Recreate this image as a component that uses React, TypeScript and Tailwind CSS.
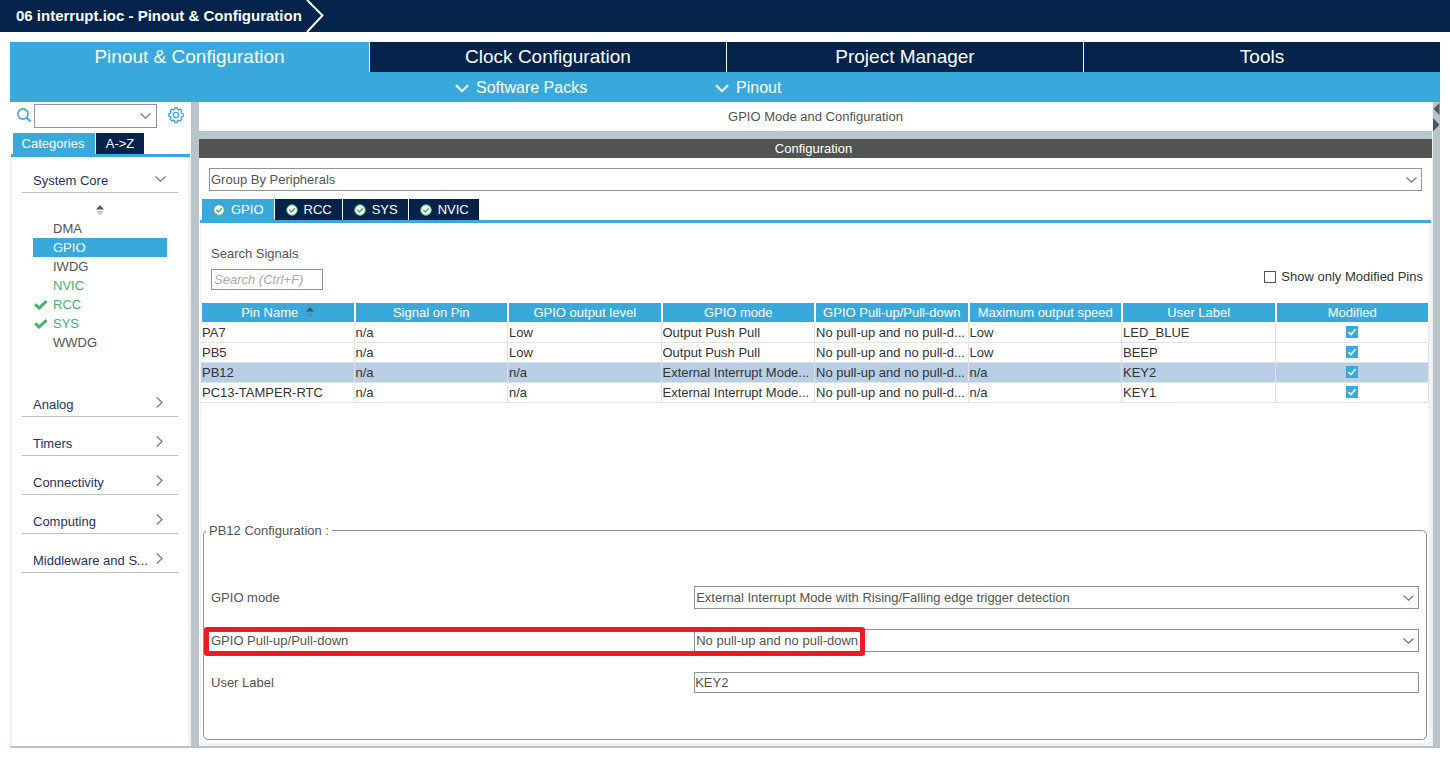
import { ReactNode, useState } from 'react';

interface Pin {
  name: string;
  signal: string;
  level: string;
  mode: string;
  pull: string;
  speed: string;
  label: string;
}

const pins: Pin[] = [
  { name: 'PA7', signal: 'n/a', level: 'Low', mode: 'Output Push Pull', pull: 'No pull-up and no pull-d...', speed: 'Low', label: 'LED_BLUE' },
  { name: 'PB5', signal: 'n/a', level: 'Low', mode: 'Output Push Pull', pull: 'No pull-up and no pull-d...', speed: 'Low', label: 'BEEP' },
  { name: 'PB12', signal: 'n/a', level: 'n/a', mode: 'External Interrupt Mode...', pull: 'No pull-up and no pull-d...', speed: 'n/a', label: 'KEY2' },
  { name: 'PC13-TAMPER-RTC', signal: 'n/a', level: 'n/a', mode: 'External Interrupt Mode...', pull: 'No pull-up and no pull-d...', speed: 'n/a', label: 'KEY1' },
];

const columns = [
  'Pin Name',
  'Signal on Pin',
  'GPIO output level',
  'GPIO mode',
  'GPIO Pull-up/Pull-down',
  'Maximum output speed',
  'User Label',
  'Modified',
];

const coreItems = [
  { name: 'DMA', state: 'idle' },
  { name: 'GPIO', state: 'active' },
  { name: 'IWDG', state: 'idle' },
  { name: 'NVIC', state: 'used' },
  { name: 'RCC', state: 'done' },
  { name: 'SYS', state: 'done' },
  { name: 'WWDG', state: 'idle' },
];

const categories = ['Analog', 'Timers', 'Connectivity', 'Computing', 'Middleware and S...'];

function ChevronDown({ className }: { className?: string }) {
  return (
    <svg className={className} width="11" height="6" viewBox="0 0 11 6" fill="none" stroke="#777" strokeWidth="1.2">
      <path d="M0.5 0.5 L5.5 5.2 L10.5 0.5" />
    </svg>
  );
}

function ChevronRight() {
  return (
    <svg className="mr-[15px] mb-[6px]" width="7" height="11" viewBox="0 0 7 11" fill="none" stroke="#777" strokeWidth="1.2">
      <path d="M0.7 0.5 L6 5.5 L0.7 10.5" />
    </svg>
  );
}

function MenuChevron() {
  return (
    <svg width="14" height="9" viewBox="0 0 14 9" fill="none" stroke="#fff" strokeWidth="2">
      <path d="M1 1.2 L7 7.2 L13 1.2" />
    </svg>
  );
}

function SortIcon({ up, down }: { up: string; down: string }) {
  return (
    <svg width="8" height="11" viewBox="0 0 8 11">
      <path d="M0 4.5 L4 0 L8 4.5 Z" fill={up} />
      <path d="M0 6 L4 10.5 L8 6 Z" fill={down} />
    </svg>
  );
}

function GearIcon() {
  return (
    <svg width="16" height="16" viewBox="0 0 16 16" fill="none" stroke="#39a9dc" strokeWidth="1.3">
      <path d="M6.9 0.7h2.2l.4 1.7 1.2.5 1.5-.9 1.6 1.6-.9 1.5.5 1.2 1.8.5v2.4l-1.8.5-.5 1.2.9 1.5-1.6 1.6-1.5-.9-1.2.5-.4 1.7H6.9l-.4-1.7-1.2-.5-1.5.9-1.6-1.6.9-1.5-.5-1.2-1.8-.5V6.8l1.8-.5.5-1.2-.9-1.5 1.6-1.6 1.5.9 1.2-.5z" />
      <circle cx="8" cy="8" r="2.6" />
    </svg>
  );
}

function StatusIcon() {
  return (
    <svg width="12" height="12" viewBox="0 0 12 12">
      <circle cx="6" cy="6" r="5.3" fill="#fff" stroke="#49b170" strokeWidth="1" />
      <path d="M3.2 5.8 L5.4 8 L9 4.3" fill="none" stroke="#49b170" strokeWidth="1.5" />
    </svg>
  );
}

function SelectBox({ id, label, value, className }: { id: string; label?: string; value: string; className?: string }) {
  return (
    <div className={`relative ${className ?? ''}`}>
      <select
        id={id}
        aria-label={label}
        className="block h-[23px] w-full appearance-none border border-[#8c949c] bg-white pl-px text-[#525452]"
      >
        <option>{value}</option>
      </select>
      <ChevronDown className="pointer-events-none absolute top-[9px] right-[5px]" />
    </div>
  );
}

function Sidebar() {
  return (
    <aside className="flex w-[181px] flex-shrink-0 flex-col">
      <div className="flex h-[31px] items-start pt-0.5 pl-[7px]">
        <svg className="mt-1 mr-[3px]" width="14" height="14" viewBox="0 0 14 14" fill="none" stroke="#39a9dc">
          <circle cx="6" cy="6" r="5.1" strokeWidth="1.6" />
          <path d="M9.6 9.6 L13.5 13.4" strokeWidth="2" />
        </svg>
        <div className="relative">
          <select aria-label="Search peripheral" className="block h-6 w-[123px] appearance-none border border-[#8c949c] bg-white" />
          <ChevronDown className="pointer-events-none absolute top-[9px] right-[6px]" />
        </div>
        <button aria-label="Settings" className="mt-[3px] ml-[11px]">
          <GearIcon />
        </button>
      </div>
      <div className="flex h-[21px] gap-px pl-[3px] text-white">
        <button className="w-[82px] bg-[#39a9dc] pr-0.5">Categories</button>
        <button className="w-12 bg-[#03234b]">A-&gt;Z</button>
      </div>
      <div className="mr-px ml-px h-[3px] bg-[#39a9dc]" />
      <nav className="flex-1 border-r-3 border-l-2 border-[#f0f2f4] pr-[10px] pl-[10px]">
        <button className="flex h-9 w-full items-center justify-between border-b border-[#b9c4ca] pt-3 pl-[11px] text-[#1e3264]">
          System Core
          <ChevronDown className="mr-3 mb-1" />
        </button>
        <div className="flex h-[26px] items-center justify-center pt-2">
          <SortIcon up="#525452" down="#c8c8c8" />
        </div>
        <ul className="mr-[11px] mb-[26px] ml-[11px]">
          {coreItems.map(item => (
            <li
              key={item.name}
              className={`flex h-[19px] items-center ${
                item.state === 'active' ? 'bg-[#39a9dc] text-white' :
                item.state === 'idle' ? 'text-[#525452]' :
                'text-[#49b170]'
              }`}
            >
              <span className="w-5 pl-px">
                {item.state === 'done' && (
                  <svg width="14" height="10" viewBox="0 0 14 10" fill="none" stroke="#49b170" strokeWidth="3">
                    <path d="M1.2 4.2 L5 8 L12.6 1.2" />
                  </svg>
                )}
              </span>
              {item.name}
            </li>
          ))}
        </ul>
        {categories.map(name => (
          <button
            key={name}
            className="flex h-[39px] w-full items-center justify-between border-b border-[#b9c4ca] pt-4 pl-[11px] text-[#1e3264]"
          >
            {name}
            <ChevronRight />
          </button>
        ))}
      </nav>
    </aside>
  );
}

function PinTable({ selected, onSelect }: { selected: string; onSelect: (name: string) => void }) {
  return (
    <table className="w-full table-fixed border-separate border-spacing-0">
      <thead>
        <tr>
          {columns.map((column, i) => (
            <th key={column} className="h-5 border-x border-b border-white bg-[#39a9dc] p-0 font-normal text-white">
              <span className="flex h-[19px] items-center justify-center gap-2 whitespace-nowrap">
                {column}
                {i === 0 && <SortIcon up="#525452" down="#4f94b8" />}
              </span>
            </th>
          ))}
        </tr>
      </thead>
      <tbody>
        {pins.map(pin => (
          <tr key={pin.name} onClick={() => onSelect(pin.name)} className={pin.name === selected ? 'bg-[#b8cee5]' : ''}>
            {[pin.name, pin.signal, pin.level, pin.mode, pin.pull, pin.speed, pin.label].map((value, i) => (
              <td key={i} className="h-5 overflow-hidden border-r border-b border-[#dfe3e8] p-0 pl-px leading-[19px] whitespace-nowrap text-[#333]">
                {value}
              </td>
            ))}
            <td className="h-5 border-r border-b border-[#dfe3e8] p-0 pb-px">
              <Checkbox label={`${pin.name} modified`} />
            </td>
          </tr>
        ))}
      </tbody>
    </table>
  );
}

function Checkbox({ label }: { label: string }) {
  return (
    <div className="relative mx-auto size-3">
      <input type="checkbox" defaultChecked aria-label={label} className="peer block size-3 appearance-none border border-[#39a9dc] checked:bg-[#39a9dc]" />
      <svg className="pointer-events-none absolute top-0 left-0" width="12" height="12" viewBox="0 0 12 12" fill="none" stroke="#fff" strokeWidth="1.5">
        <path d="M2.5 6 L5 8.6 L9.6 3" />
      </svg>
    </div>
  );
}

function ConfigRow({ id, label, children }: { id: string; label: string; children: ReactNode }) {
  return (
    <div className="relative grid grid-cols-[2fr_3fr] items-center">
      <label htmlFor={id}>{label}</label>
      {children}
    </div>
  );
}

export default function App() {
  const [selected, setSelected] = useState('PB12');

  return (
    <div className="flex min-h-screen flex-col bg-white pb-[10px] font-['Liberation_Sans',Arial,sans-serif] text-[13px] leading-5 text-[#525452]">
      <header className="flex h-8 items-center bg-[#03234b] pl-4 text-white">
        <h1 className="text-[15px] font-bold">06 interrupt.ioc - Pinout &amp; Configuration</h1>
        <svg className="ml-1" width="18" height="32" viewBox="0 0 18 32" fill="none" stroke="#fff" strokeWidth="2">
          <path d="M1 0 L16.5 15.5 L1 32" />
        </svg>
      </header>

      <div className="mx-[10px] mt-[10px] flex flex-1 flex-col border-b-2 border-[#b9c4ca]">
        <div className="grid h-[30px] grid-cols-[359fr_357fr_357fr_357fr] text-[19px] text-white">
          <button className="bg-[#39a9dc]">Pinout &amp; Configuration</button>
          <button className="border-l border-white bg-[#03234b]">Clock Configuration</button>
          <button className="border-l border-white bg-[#03234b]">Project Manager</button>
          <button className="border-l border-white bg-[#03234b]">Tools</button>
        </div>
        <div className="flex h-[30px] items-center bg-[#39a9dc] pt-0.5 pl-[445px] text-[16px] text-white">
          <button className="flex w-[260px] items-center gap-[7px]">
            <MenuChevron />
            Software Packs
          </button>
          <button className="flex items-center gap-[7px]">
            <MenuChevron />
            Pinout
          </button>
        </div>

        <div className="flex flex-1">
          <Sidebar />
          <div className="w-2 flex-shrink-0 bg-[#b9c4ca]" />

          <main className="flex min-w-0 flex-1 flex-col border-b-3 border-[#f0f2f4]">
            <h2 className="h-[29px] pt-[5px] text-center">GPIO Mode and Configuration</h2>
            <div className="h-2 bg-[#b9c4ca]" />
            <h3 className="h-[19px] bg-[#525452] pr-1 text-center text-white">Configuration</h3>
            <SelectBox id="group" label="Group by" value="Group By Peripherals" className="mx-[10px] mt-[10px]" />

            <div className="mt-2 ml-[3px] flex h-[21px] gap-px text-white">
              {['GPIO', 'RCC', 'SYS', 'NVIC'].map((tab, i) => (
                <button
                  key={tab}
                  className={`flex items-center gap-[6px] pr-[10px] pl-[11px] ${i === 0 ? 'bg-[#39a9dc]' : 'bg-[#03234b]'}`}
                >
                  <StatusIcon />
                  {tab}
                </button>
              ))}
            </div>
            <div className="mr-px ml-px h-[3px] bg-[#39a9dc]" />

            <div className="ml-px flex flex-1 flex-col border-r-3 border-l border-[#f0f2f4]">
              <div className="flex justify-between pt-[21px] pr-[6px] pl-[10px]">
                <div className="flex flex-col gap-[5px]">
                  <label htmlFor="signals">Search Signals</label>
                  <input
                    id="signals"
                    placeholder="Search (Ctrl+F)"
                    className="h-[21px] w-28 border border-[#8c949c] pl-0.5 placeholder:text-[#aaa] placeholder:italic"
                  />
                </div>
                <label className="mt-[23px] flex h-5 items-center gap-[5px] text-[#333]">
                  <input type="checkbox" className="size-3 appearance-none border border-[#525452] checked:bg-[#39a9dc]" />
                  Show only Modified Pins
                </label>
              </div>

              <div className="mt-[13px] mb-8">
                <PinTable selected={selected} onSelect={setSelected} />
              </div>

              <fieldset className="mx-0.5 mt-auto mb-[3px] rounded-[5px] border border-[#8c949c] px-[7px]">
                <legend className="-ml-[5px] px-[3px] pt-px">PB12 Configuration :</legend>
                <div className="flex flex-col gap-5 pt-[45px] pb-[46px]">
                  <ConfigRow id="mode" label="GPIO mode">
                    <SelectBox id="mode" value="External Interrupt Mode with Rising/Falling edge trigger detection" />
                  </ConfigRow>
                  <ConfigRow id="pull" label="GPIO Pull-up/Pull-down">
                    <SelectBox id="pull" value="No pull-up and no pull-down" />
                    <div className="pointer-events-none absolute -top-0.5 -left-[7px] h-[29px] w-[661px] rounded-[3px] border-5 border-[#ed1c24]" />
                  </ConfigRow>
                  <ConfigRow id="label" label="User Label">
                    <input id="label" defaultValue="KEY2" className="h-[21px] w-full border border-[#8c949c]" />
                  </ConfigRow>
                </div>
              </fieldset>
            </div>
          </main>

          <div className="w-2 flex-shrink-0 border-l border-[#f0f2f4] bg-[#b9c4ca]">
            <svg width="7" height="32" viewBox="0 0 7 32" fill="#525452">
              <path d="M6.5 1 L0.5 7 L6.5 13 Z" />
              <path d="M0 16 L6.5 22.7 L0 29.5 Z" />
            </svg>
          </div>
        </div>
      </div>
    </div>
  );
}
